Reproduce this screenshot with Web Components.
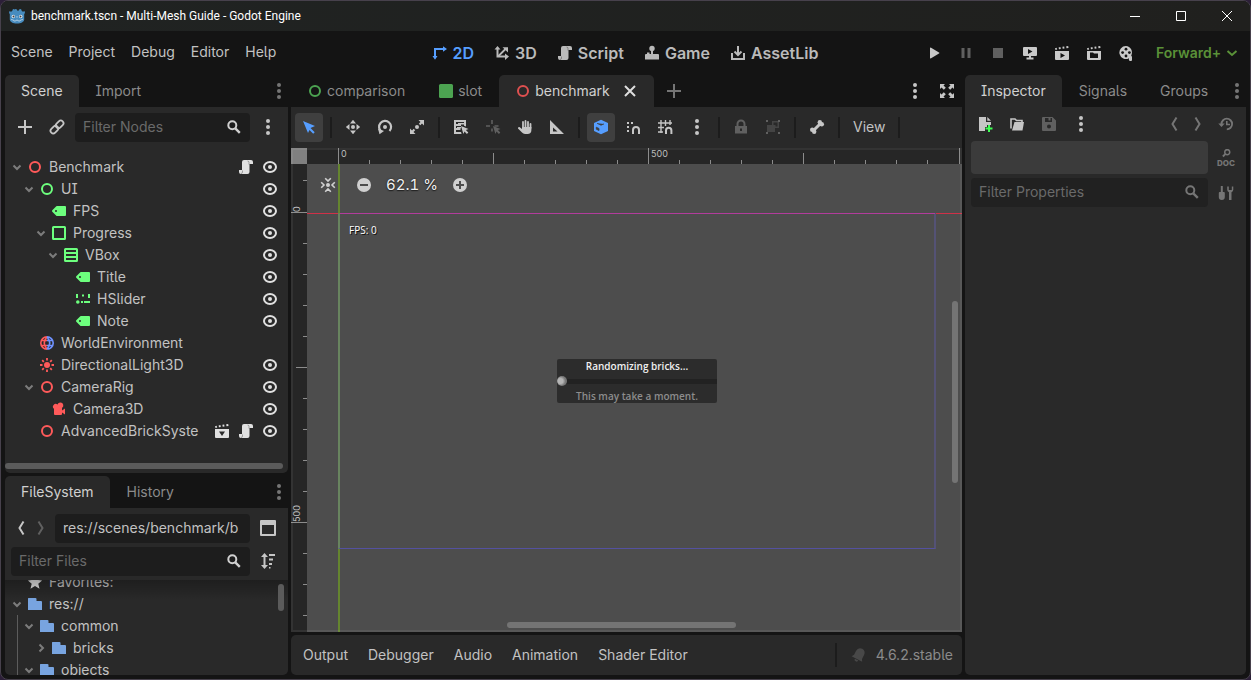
<!DOCTYPE html>
<html lang="en">
<head>
<meta charset="utf-8">
<title>benchmark.tscn - Multi-Mesh Guide - Godot Engine</title>
<style>
  :root {
    --base: #141414; --panel: #292929; --field: #1d1d1d; --raised: #3f3f3f;
    --text: #c2c2c2; --strong: #dedede; --dim: #8b8b8b; --faint: #6a6a6a;
    --accent: #569eff; --green: #6dff7e; --red: #ff5a5a; --renderer: #5a9138;
  }
  html, body { height: 100%; margin: 0; }
  body {
    background: #2c1f38; color: var(--text);
    font: 14px/20px Inter, "Liberation Sans", sans-serif;
    font-feature-settings: "cv05", "cv08";
  }
</style>
</head>
<body>
<editor-window></editor-window>
<script>
const S = (d, w = 2, extra = '') => `<path d="${d}" fill="none" stroke="currentColor" stroke-width="${w}" ${extra}/>`;
const F = (d, extra = '') => `<path d="${d}" fill="currentColor" ${extra}/>`;
const C = (x, y, r, extra = 'fill="currentColor"') => `<circle cx="${x}" cy="${y}" r="${r}" ${extra}/>`;
const CLAP = F('M1 3.2l1.6-.5.6 1.8-1.7.5zM4.6 2.4l1.8-.4.4 1.9-1.8.4zM8.4 1.8l1.8-.3.3 1.9-1.8.3zM12.2 1.3l2-.3.3 2-2 .3z');
const POINTER = F('M8 7l7.5 3-2.6 1.1 2.4 2.4-1.4 1.4-2.4-2.4L10.400 15z');
const SCRIPT = F('M6 1a2 2 0 0 0-2 2v8H1v2a2 2 0 0 0 2 2h6.500a2 2 0 0 0 2-2V5H15V3a2 2 0 0 0-2-2z')
  + '<path d="M4.500 11.500v1.500a1.500 1.500 0 0 1-1.500 1.500M11 5.500V3.500a1.500 1.500 0 0 0-1.500-1.500" stroke="#000" stroke-opacity=".3" fill="none"/>';
const ICONS = {
  godot: `<path d="M6 1l2 .6.4 1.200h1.200L10 1.600 12 1l.8 2 1.200.7L15.500 3 16 5l-.8 1v5.500C15 14 12 15.500 8 15.500S1 14 .8 11.500V6L0 5l.5-2 1.500.7L3.200 3 4 1l2 .6z" fill="#478cbf"/>
    <circle cx="4.300" cy="8.500" r="1.700" fill="#e8f0f6"/><circle cx="11.700" cy="8.500" r="1.700" fill="#e8f0f6"/><circle cx="4.500" cy="8.500" r="1" fill="#414042"/><circle cx="11.500" cy="8.500" r="1" fill="#414042"/>
    <path d="M8 8v1.800M2 11.500l2.500.5.4 1h1.800l.3-.8h2l.3.8h1.800l.4-1 2.500-.5" stroke="#cfe0ee" stroke-width=".7" fill="none"/>`,
  min: S('M3 8.500h10', 1), max: S('M3.500 3.500h9v9h-9z', 1), winclose: S('M3 3l10 10M13 3L3 13', 1),
  d2: F('M3 14.800L.5 11H2V3h9V1.200L15 4l-4 2.800V5H4v6h1.500z'),
  d3: F('M3.500 1L6.500 4.500H4.500v6h6.500V8.500l4 3-4 3.500V12.500H2.500v-8H.5z') + S('M4 11.500L11.500 4', 1.800) + F('M8.500 2.200H14V7.500z'),
  script: SCRIPT,
  game: C(8, 3.500, 2.700) + F('M7 5h2v4h5a1 1 0 0 1 1 1v4.500H1V10a1 1 0 0 1 1-1h1V7.500h2.500V9H7z'),
  asset: S('M2 8v6h12V8') + S('M8 1v8') + S('M4.500 6.500L8 10l3.500-3.500'),
  play: F('M4 3.300v9.400a.7.7 0 0 0 1.100.5L13 8.600a.7.7 0 0 0 0-1.200L5.100 2.800A.7.7 0 0 0 4 3.300z'),
  pause: F('M3.500 3h3v10h-3zM9.500 3h3v10h-3z'), stop: F('M3 3h10v10H3z'),
  remote: `<path d="M2 2h12a1 1 0 0 1 1 1v7a1 1 0 0 1-1 1H9v1.500h2.500V14.500h-7V12.500H7V11H2a1 1 0 0 1-1-1V3a1 1 0 0 1 1-1zm4 2v5l4.500-2.500z" fill="currentColor" fill-rule="evenodd"/>`,
  playscene: CLAP + `<path d="M1 6h14v8a1 1 0 0 1-1 1H2a1 1 0 0 1-1-1zm5.500 2v5l4.500-2.500z" fill="currentColor" fill-rule="evenodd"/>`,
  playcustom: CLAP + `<path d="M1 6h14v8a1 1 0 0 1-1 1H2a1 1 0 0 1-1-1zm3 1.500v5.500h8V8.500H8l-1-1z" fill="currentColor" fill-rule="evenodd"/>`,
  packed: CLAP + `<path d="M1 6h14v8a1 1 0 0 1-1 1H2a1 1 0 0 1-1-1zm4 2.500L8 13l3-4.500z" fill="currentColor" fill-rule="evenodd"/>`,
  movie: `<path d="M8 1a6.500 6.500 0 1 0 3 12.200V14a1.500 1.500 0 0 0 3 1v-3a3 3 0 0 0-.8-1.500A6.500 6.500 0 0 0 8 1z" fill="currentColor"/><g fill="#141414"><circle cx="8" cy="4.200" r="1.400"/><circle cx="8" cy="11" r="1.400"/><circle cx="4.600" cy="7.600" r="1.400"/><circle cx="11.400" cy="7.600" r="1.400"/></g>`,
  chevron: S('M3.500 6l4.500 4 4.500-4'), tree: S('M4.500 6.500L8 10l3.500-3.500'), treeright: S('M6.500 4.500L10 8l-3.500 3.500'),
  dots: C(8, 2, 2) + C(8, 8, 2) + C(8, 14, 2),
  add: F('M7 1v6H1v2h6v6h2V9h6V7H9V1z'),
  link: `<g transform="rotate(-45 8 8)" fill="none" stroke="currentColor" stroke-width="1.800"><rect x="0" y="5.300" width="8.600" height="5.400" rx="2.700"/><rect x="7.400" y="5.300" width="8.600" height="5.400" rx="2.700"/></g>`,
  search: C(6.300, 6.300, 4, 'fill="none" stroke="currentColor" stroke-width="2"') + S('M9.300 9.300l4.500 4.500', 2.400),
  ring: C(8, 8, 5, 'fill="none" stroke="currentColor" stroke-width="2"'),
  square: '<rect x="1" y="1" width="14" height="14" rx="1.500" fill="currentColor"/>',
  close: S('M3 3l10 10M13 3L3 13'),
  expand: F('M1 1h5L4.500 2.500l2.300 2.300-2 2-2.300-2.300L1 6zM15 1v5l-1.500-1.500-2.300 2.300-2-2 2.300-2.300L10 1zM1 15v-5l1.500 1.500 2.300-2.300 2 2-2.300 2.300L6 15zM15 15h-5l1.500-1.500-2.300-2.300 2-2 2.300 2.300L15 10z'),
  select: F('M2 2l12 5-4.500 2 4.200 4.200-1.500 1.500L8.500 11 7 14z'),
  move: C(8, 8, 2) + F('M8 .8L11 4.500H5zM8 15.200L11 11.500H5zM.8 8L4.500 5v6zM15.200 8L11.500 5v6z'),
  rotate: S('M4.200 12.500A6 6 0 1 1 12.500 12', 2.200) + C(8, 8, 2) + F('M1 9.500l6 2.500-4.500 3.300z'),
  scale: C(8, 8, 2) + F('M9.500 1H15v5.500l-2-2-1.700 1.700-1.500-1.500L11.500 3zM1 9.500l2 2 1.700-1.700 1.500 1.500L4.500 13l2 2H1z'),
  listsel: F('M1 1h12v6.500l-2-.8V3H3v2h5v2H3v2h4l.6 2H3v2h5l.6 2H1z') + F('M5 4h6v1.500H5zM4 8h4v1.500H4z') + POINTER,
  pivot: F('M6.200 1h1.600v4H6.200zM1 6.200h4v1.600H1zM9.500 6.200h4v1.600h-4zM6.200 9.500h1.600v3H6.200z') + POINTER,
  hand: S('M6 9V3M8.500 8V2M11 8V3M13.500 9V5', 1.800, 'stroke-linecap="round"') + F('M5 8h9.400v3a4 4 0 0 1-4 4H8a4 4 0 0 1-3-1.500L1 9.500a1.200 1.200 0 0 1 1.800-1.300L5 10z'),
  ruler: `<path d="M1 1v14h14zm3 7.500L8.500 12.500H4z" fill="currentColor" fill-rule="evenodd"/>`,
  cube: F('M8 .8l7 3.200v8L8 15.200 1 12V4z') + '<path d="M4 4.300L8 6.200l3-1.300M3.300 8.200v2l2.700 1.300v-2z" fill="#3f3f3f" stroke="#3f3f3f" stroke-width=".8"/>',
  snap: F('M2 3h2v2H2zM6 3h2v2H6zM2 7h2v2H2zM2 11h2v2H2z') + S('M8 15v-4a3 3 0 0 1 6 0v4'),
  grid: S('M4 1v13M8.500 1v6M13 1v5M1 4h14M1 8.500h6M1 13h5', 1.400) + S('M9 15v-3.500a2.700 2.700 0 0 1 5.400 0V15'),
  lock: S('M4.500 8V5a3.500 3.500 0 0 1 7 0v3') + `<path d="M2 7h12v7.500H2zm5 2.500V12h2V9.500z" fill="currentColor" fill-rule="evenodd"/>`,
  group: F('M1 1h2v2H1zM13 1h2v2h-2zM1 13h2v2H1zM13 13h2v2h-2z') + `<path d="M7 2h7v7h-4v4H2V6h5zm1.500 1.500V6h2V7.500h2v-4z" fill="currentColor" fill-opacity=".5" fill-rule="evenodd"/>`,
  bone: S('M5 11l6-6', 3) + C(3.200, 10.800, 2.200) + C(5.200, 12.800, 2.200) + C(10.800, 3.200, 2.200) + C(12.800, 5.200, 2.200),
  eye: '<ellipse cx="8" cy="8" rx="6" ry="5" fill="none" stroke="currentColor" stroke-width="2"/>' + C(8, 8, 2),
  label: `<path d="M6 3a1 1 0 0 0-.7.3l-4 4a1 1 0 0 0 0 1.400l4 4A1 1 0 0 0 6 13h8a1 1 0 0 0 1-1V4a1 1 0 0 0-1-1zM5 7a1 1 0 0 1 0 2 1 1 0 0 1 0-2z" fill="currentColor" fill-rule="evenodd"/>`,
  panel: '<rect x="2" y="2" width="12" height="12" rx=".5" fill="none" stroke="currentColor" stroke-width="2"/>',
  vbox: '<rect x="2" y="2" width="12" height="12" rx=".5" fill="none" stroke="currentColor" stroke-width="2"/>' + S('M2 6h12M2 10h12'),
  hslider: F('M1 3h2v4H1zM7 3.500h2v2H7zM13 3h2v4h-2zM6 10h2v2H6zM9 10h6v2H9z') + C(2.800, 11, 1.800),
  world: '<g fill="none" stroke-width="1.600"><g stroke="#ff5a5a"><path d="M8 1.800a6.200 6.200 0 0 0 0 12.400M8 2Q2.500 8 8 14M2 5.500h6M2 10.500h6"/></g><g stroke="#6f92ff"><path d="M8 1.800a6.200 6.200 0 0 1 0 12.400M8 2q5.500 6 0 12M8 5.500h6M8 10.500h6"/></g></g>',
  sun: C(8, 8, 3) + S('M8 1v2.500M8 12.500V15M1 8h2.500M12.500 8H15M3.200 3.200l1.600 1.600M11.200 11.200l1.600 1.600M12.800 3.200l-1.600 1.600M4.800 11.200l-1.600 1.600', 1.800),
  camera: F('M9.500 1.500a3 3 0 0 0-3 2A2.500 2.500 0 1 0 3 7.800V13a1 1 0 0 0 1 1h6a1 1 0 0 0 1-1v-1.500l3 2V7.500l-3 2V7a3 3 0 0 0-1.500-5.500z'),
  back: S('M10.500 1.500L6.500 8l4 6.500', 2), fwd: S('M5.500 1.500L9.500 8l-4 6.500', 2),
  split: S('M1 1h14v14H1z', 2, 'stroke-linejoin="round"') + F('M1 1h14v4H1z'),
  sort: S('M4.500 3v10') + F('M4.500 0L8 4H1zM4.500 16L8 12H1zM9 1h6v2H9zM9 5.500h4v2H9zM9 10h3v2H9zM9 14h1.500v1.500H9z'),
  star: F('M8 1.300l2.100 4.600 5 .5-3.800 3.300 1.200 5L8 12.100l-4.500 2.600 1.200-5L.9 6.400l5-.5z'),
  folder: F('M1.500 2a.5.5 0 0 0-.5.5v11a.5.5 0 0 0 .5.5h13a.5.5 0 0 0 .5-.5V6a1 1 0 0 0-1-1H9.500V3a1 1 0 0 0-1-1z'),
  newfile: F('M2 1v14h6v-4h2V9h4V6H9V1zM10.300 1v3.700H14z') + '<path d="M11 9h2v2.500h2.500v2H13V16h-2v-2.500H8.500v-2H11z" fill="#3dff52"/>',
  open: S('M2 12.500V3h4l1.500 1.500H13V6', 1.600) + F('M5.500 6H15l-1.500 8.500H3z'),
  save: `<path d="M1 2a1 1 0 0 1 1-1h9.500L15 4.500V14a1 1 0 0 1-1 1H2a1 1 0 0 1-1-1zm3 0v4h7V2H9.500v2.500h-2V2zm4 6.500a2 2 0 1 0 0 4 2 2 0 0 0 0-4z" fill="currentColor" fill-rule="evenodd"/>`,
  history: S('M3.500 8A5.300 5.300 0 1 1 8.800 13.300', 1.800) + S('M8.800 5v3.500H12', 1.600) + F('M.3 7.500h6.400L3.500 11z'),
  tools: F('M2.800 1h2v6H6a1 1 0 0 1 .8 1v4a3 3 0 0 1-6 0V8a1 1 0 0 1 .8-1h1.200zM9.200 1.500v3.300a2.800 2.800 0 0 0 1.800 2.500V15h2.500V7.300a2.800 2.800 0 0 0 1.800-2.500V1.500h-1.500V5h-3V1.500z'),
  bell: `<g transform="rotate(28 8 8)">${F('M8 1a5 5 0 0 0-4.500 5v4L2 12.500h12L12.500 10V6A5 5 0 0 0 8 1zM6 13.200h4a2 2 0 0 1-4 0z')}</g>`,
  recenter: C(8, 8, 2) + S('M5.200 1.200L8 4l2.800-2.800M5.200 14.800L8 12l2.800 2.800M1.200 5.200L4 8l-2.800 2.800M14.800 5.200L12 8l2.800 2.800', 1.600),
  minus: C(8, 8, 7) + '<path d="M4 7h8v2H4z" fill="#4d4d4d"/>',
  plus: C(8, 8, 7) + '<path d="M7 4h2v3h3v2H9v3H7V9H4V7h3z" fill="#4d4d4d"/>',
  doclens: C(10, 5, 4, 'fill="none" stroke="currentColor" stroke-width="2.400"') + S('M7.200 7.800L3 12', 3),
};

function define(name, render, attach) {
  customElements.define(name, class extends HTMLElement {
    connectedCallback() {
      if (this.shadowRoot) return;
      const t = document.createElement('template');
      t.innerHTML = render(this);
      this.attachShadow({ mode: 'open' }).append(t.content.cloneNode(true));
      if (attach) attach(this, this.shadowRoot);
    }
  });
}
const attr = (el, n, d = '') => el.getAttribute(n) ?? d;
const BTN = `button{all:unset;box-sizing:border-box;cursor:default}button:focus-visible{outline:1px solid var(--accent)}`;

define('ui-icon', el => `
  <style>:host{display:block;flex:none;width:16px;height:16px}svg{display:block;width:100%;height:100%}</style>
  <svg viewBox="0 0 16 16" aria-hidden="true">${ICONS[attr(el, 'name')]}</svg>`);

define('tool-button', el => `
  <style>:host{display:block;flex:none;width:28px;height:28px;color:var(--tool,#c6c6c6)}
  :host([active]){background:var(--raised);border-radius:4px;color:var(--accent);height:29px}
  :host([off]){color:#606060}
  :host([narrow]){width:20px}
  ${BTN}button{display:grid;place-items:center;width:100%;height:28px}</style>
  <button type="button" aria-label="${attr(el, 'label')}"><ui-icon name="${attr(el, 'icon')}"></ui-icon></button>`);

define('tool-divider', () => `
  <style>:host{display:flex;justify-content:center;flex:none;width:8px;height:21px}i{width:2px;background:#1c1c1c}</style><i></i>`);

define('text-button', el => `
  <style>:host{display:block;flex:none}${BTN}button{display:flex;align-items:center;gap:5px;height:28px;white-space:nowrap}</style>
  <button type="button">${el.hasAttribute('icon') ? `<ui-icon name="${attr(el, 'icon')}"></ui-icon>` : ''}<slot></slot></button>`);

define('text-field', el => `
  <style>:host{display:flex;align-items:center;flex:1;min-width:0;height:29px;box-sizing:border-box;padding:0 8px 1px;background:var(--fill,var(--field));border-radius:4px}
  input{all:unset;flex:1;min-width:0;font:inherit;line-height:20px}input::placeholder{color:var(--faint);opacity:1}
  ui-icon{color:var(--tool,#d0d0d0)}</style>
  <input type="text" aria-label="${attr(el, 'label')}" placeholder="${attr(el, 'placeholder')}" value="${attr(el, 'value')}">
  ${el.hasAttribute('search') ? '<ui-icon name="search"></ui-icon>' : ''}`);

define('tab-item', el => `
  <style>:host{display:block;flex:none;color:var(--dim)}
  :host([selected]){background:var(--panel);color:var(--strong);border-radius:5px 5px 0 0}
  :host([selected]) .label{color:#d0d0d0}
  ${BTN}div{display:flex;align-items:center;gap:12px;padding:0 16px}
  .tab{display:flex;align-items:center;gap:4px;height:32px}</style>
  <div><button class="tab" type="button" role="tab" aria-selected="${el.hasAttribute('selected')}">
  ${el.hasAttribute('icon') ? `<ui-icon name="${attr(el, 'icon')}" style="color:${attr(el, 'tint')}"></ui-icon>` : ''}
  <span class="label"><slot></slot></span></button>
  ${el.hasAttribute('closable') ? '<button type="button" aria-label="Close tab"><ui-icon name="close"></ui-icon></button>' : ''}</div>`);

define('dock-panel', () => `
  <style>:host{display:flex;flex-direction:column;min-width:0;min-height:0}
  nav{display:flex;align-items:center;gap:1px;height:32px;flex:none}
  section{flex:1;min-height:0;display:flex;flex-direction:column;background:var(--panel);border-radius:var(--dock-radius,0 0 5px 5px);overflow:hidden}
  .more{margin-left:auto;display:flex;align-items:center}</style>
  <nav role="tablist"><slot name="tab"></slot><div class="more"><slot name="more"></slot></div></nav>
  <section><slot></slot></section>`);

define('tree-row', el => `
  <style>:host{display:flex;align-items:center;height:22px;padding:0 10px 0 calc(4px + 12px*var(--level,0))}
  ${BTN}.arrow{flex:none;width:16px;height:16px;margin-right:2px;color:#7c7c7c}
  span{flex:1;min-width:0;margin-left:6px;white-space:nowrap}
  .acts{display:flex;gap:8px;color:#e0e0e0}</style>
  <button class="arrow" type="button" aria-label="Toggle">${el.hasAttribute('arrow') ? `<ui-icon name="${attr(el, 'arrow')}"></ui-icon>` : ''}</button>
  <ui-icon name="${attr(el, 'icon')}" style="color:${attr(el, 'tint')}"></ui-icon>
  <span><slot></slot></span>
  <div class="acts">${attr(el, 'acts').split(' ').filter(Boolean).map(a => `<button type="button" aria-label="${a}"><ui-icon name="${a}"></ui-icon></button>`).join('')}</div>`,
  el => { el.style.setProperty('--level', attr(el, 'level', 0)); el.setAttribute('role', 'treeitem'); });

define('title-bar', () => `
  <style>:host{display:flex;align-items:center;height:30px;flex:none;background:linear-gradient(90deg,#202322,#20201e);color:#fff;padding-left:8px;font:12px/16px Roboto,"Open Sans",sans-serif}
  span{flex:1;margin-left:6px}${BTN}button{width:46px;height:30px;display:grid;place-items:center}</style>
  <ui-icon name="godot"></ui-icon><span>benchmark.tscn - Multi-Mesh Guide - Godot Engine</span>
  <button type="button" aria-label="Minimize"><ui-icon name="min"></ui-icon></button>
  <button type="button" aria-label="Maximize"><ui-icon name="max"></ui-icon></button>
  <button type="button" aria-label="Close"><ui-icon name="winclose"></ui-icon></button>`);

define('main-menu', () => `
  <style>:host{display:grid;grid-template-columns:1fr auto 1fr;align-items:center;height:44px;flex:none;padding:0 11px 0 10px}
  .menu{display:flex;gap:16px;padding-bottom:2px}
  .modes{display:flex;gap:20px;font-size:16px;font-weight:600;color:#bababa}.on{color:var(--accent)}
  .run{display:flex;align-items:center;justify-content:flex-end;gap:4px;--tool:#c9c9c9}
  label{position:relative;display:flex;align-items:center;margin-left:12px;color:var(--renderer)}
  select{all:unset;font-weight:600;padding-right:17px}
  label ui-icon{position:absolute;right:-1px;pointer-events:none}</style>
  <div class="menu"><text-button>Scene</text-button><text-button>Project</text-button><text-button>Debug</text-button><text-button>Editor</text-button><text-button>Help</text-button></div>
  <div class="modes"><text-button icon="d2" class="on">2D</text-button><text-button icon="d3">3D</text-button><text-button icon="script">Script</text-button><text-button icon="game">Game</text-button><text-button icon="asset">AssetLib</text-button></div>
  <div class="run"><tool-button icon="play" label="Run project"></tool-button><tool-button off icon="pause" label="Pause"></tool-button><tool-button off icon="stop" label="Stop"></tool-button><tool-button icon="remote" label="Remote deploy"></tool-button><tool-button icon="playscene" label="Run scene"></tool-button><tool-button icon="playcustom" label="Run specific scene"></tool-button><tool-button icon="movie" label="Movie maker"></tool-button>
  <label><select aria-label="Rendering method"><option>Forward+</option></select><ui-icon name="chevron"></ui-icon></label></div>`);

define('scene-dock', () => `
  <style>:host{display:contents}dock-panel{height:100%}
  .bar{display:flex;align-items:flex-start;gap:4px;padding:6px;flex:none}
  .tree{flex:1;padding-top:8px;min-height:0;overflow:hidden}
  .hbar{height:6px;flex:none;margin:0 5px 4px 0;border-radius:3px;background:#5b5b5b}
  .more{color:#757575;margin-right:1px}</style>
  <dock-panel>
    <tab-item slot="tab" selected>Scene</tab-item><tab-item slot="tab">Import</tab-item>
    <ui-icon slot="more" class="more" name="dots"></ui-icon>
    <div class="bar"><tool-button icon="add" label="Add node"></tool-button><tool-button icon="link" label="Instantiate scene"></tool-button><text-field label="Filter Nodes" placeholder="Filter Nodes" search></text-field><tool-button icon="dots" label="Scene options"></tool-button></div>
    <div class="tree" role="tree">
      <tree-row level="0" arrow="tree" icon="ring" tint="var(--red)" acts="script eye">Benchmark</tree-row>
      <tree-row level="1" arrow="tree" icon="ring" tint="var(--green)" acts="eye">UI</tree-row>
      <tree-row level="2" icon="label" tint="var(--green)" acts="eye">FPS</tree-row>
      <tree-row level="2" arrow="tree" icon="panel" tint="var(--green)" acts="eye">Progress</tree-row>
      <tree-row level="3" arrow="tree" icon="vbox" tint="var(--green)" acts="eye">VBox</tree-row>
      <tree-row level="4" icon="label" tint="var(--green)" acts="eye">Title</tree-row>
      <tree-row level="4" icon="hslider" tint="var(--green)" acts="eye">HSlider</tree-row>
      <tree-row level="4" icon="label" tint="var(--green)" acts="eye">Note</tree-row>
      <tree-row level="1" icon="world">WorldEnvironment</tree-row>
      <tree-row level="1" icon="sun" tint="var(--red)" acts="eye">DirectionalLight3D</tree-row>
      <tree-row level="1" arrow="tree" icon="ring" tint="var(--red)" acts="eye">CameraRig</tree-row>
      <tree-row level="2" icon="camera" tint="var(--red)" acts="eye">Camera3D</tree-row>
      <tree-row level="1" icon="ring" tint="var(--red)" acts="packed script eye">AdvancedBrickSyste</tree-row>
    </div><div class="hbar"></div>
  </dock-panel>`);

define('files-dock', () => `
  <style>:host{display:contents}dock-panel{height:100%}
  .bar{display:flex;align-items:flex-start;gap:4px;padding:6px 6px 0;flex:none}.bar+.bar{padding:4px 6px}
  .nav{display:flex}
  .tree{position:relative;flex:1;min-height:0;overflow:hidden}
  .rows{margin-top:-9px}
  .tree::before{content:"";position:absolute;inset:0 0 auto;height:20px;background:linear-gradient(#00000044,#0000)}
  .guide{position:absolute;left:12px;top:35px;bottom:0;width:1px;background:#5c5c5c}
  .vbar{position:absolute;right:4px;top:4px;width:6px;height:27px;border-radius:3px;background:#5b5b5b}
  .more{color:#757575;margin-right:1px}</style>
  <dock-panel>
    <tab-item slot="tab" selected>FileSystem</tab-item><tab-item slot="tab">History</tab-item>
    <ui-icon slot="more" class="more" name="dots"></ui-icon>
    <div class="bar"><div class="nav"><tool-button narrow icon="back" label="Back"></tool-button><tool-button narrow off icon="fwd" label="Forward"></tool-button></div><text-field label="Path" value="res://scenes/benchmark/b"></text-field><tool-button icon="split" label="Change split mode"></tool-button></div>
    <div class="bar"><text-field label="Filter Files" placeholder="Filter Files" search></text-field><tool-button icon="sort" label="Sort files"></tool-button></div>
    <div class="tree"><div class="rows" role="tree">
      <tree-row level="0" icon="star" tint="#e0e0e0">Favorites:</tree-row>
      <tree-row level="0" arrow="tree" icon="folder" tint="#78a4e0">res://</tree-row>
      <tree-row level="1" arrow="tree" icon="folder" tint="#78a4e0">common</tree-row>
      <tree-row level="2" arrow="treeright" icon="folder" tint="#78a4e0">bricks</tree-row>
      <tree-row level="1" arrow="tree" icon="folder" tint="#78a4e0">objects</tree-row>
    </div><div class="guide"></div><div class="vbar"></div></div>
  </dock-panel>`);

define('inspector-dock', () => `
  <style>:host{display:contents}dock-panel{height:100%}
  .tools,.line{display:flex;align-items:center;padding:0 6px;gap:4px}
  .tools{height:32px;padding-top:2px}
  .tools .hist{margin-left:auto;display:flex;gap:4px;align-items:center}
  .tools tool-button{height:30px}
  .line{margin-bottom:4px}
  .line text-field{--fill:#212121}
  .object{flex:1;height:33px;border-radius:4px;background:#3b3b3b}
  .dim{--tool:#757575}
  .doc{all:unset;display:flex;flex-direction:column;align-items:center;width:28px;color:#757575;font:800 8px/8px Inter,sans-serif}
  .doc ui-icon{width:12px;height:10px}
  .more{color:#757575;margin-right:1px}</style>
  <dock-panel>
    <tab-item slot="tab" selected>Inspector</tab-item><tab-item slot="tab">Signals</tab-item><tab-item slot="tab">Groups</tab-item>
    <ui-icon slot="more" class="more" name="dots"></ui-icon>
    <div class="tools"><tool-button icon="newfile" label="New resource"></tool-button><tool-button icon="open" label="Load resource"></tool-button><tool-button off icon="save" label="Save resource"></tool-button><tool-button icon="dots" label="Resource options"></tool-button>
      <div class="hist dim"><tool-button narrow icon="back" label="Previous object"></tool-button><tool-button narrow icon="fwd" label="Next object"></tool-button><tool-button icon="history" label="Object history"></tool-button></div></div>
    <div class="line"><div class="object"></div><button type="button" class="doc"><ui-icon name="doclens"></ui-icon>DOC</button></div>
    <div class="line dim"><text-field label="Filter Properties" placeholder="Filter Properties" search></text-field><tool-button icon="tools" label="Property tools"></tool-button></div>
  </dock-panel>`);

define('canvas-ruler', () => `
  <style>:host{display:block;overflow:hidden;background:#262626}svg{display:block;width:100%;height:100%}
  text{font-size:9px;fill:#bdbdbd}</style><svg aria-hidden="true"></svg>`,
  (el, root) => {
    const vertical = el.hasAttribute('vertical'), origin = +attr(el, 'origin'), step = 31.05;
    const last = Math.ceil((vertical ? innerHeight : innerWidth) / step);
    let out = '';
    for (let i = -1; i <= last; i++) {
      const p = Math.floor(origin + i * step), len = i % 10 === 0 ? 16 : i % 5 === 0 ? 11 : 4;
      out += vertical ? `<rect y="${p}" x="${16 - len}" height="1" width="${len}" fill="#8c8c8c"/>` : `<rect x="${p}" y="${16 - len}" width="1" height="${len}" fill="#8c8c8c"/>`;
      const room = p + 30 < (vertical ? el.clientHeight : el.clientWidth);
      if (i % 10 === 0 && room) out += vertical ? `<text transform="translate(9 ${p}) rotate(-90)">${i * 50}</text>` : `<text x="${p + 3}" y="9">${i * 50}</text>`;
    }
    root.querySelector('svg').innerHTML = out;
  });

define('canvas-view', () => `
  <style>:host{display:grid;grid-template:16px 1fr / 16px 1fr;position:relative;min-height:0;background:#4d4d4d;overflow:hidden}
  :host::after{content:"";position:absolute;inset:0;border:2px solid #ffffff10;pointer-events:none}
  .corner{background:#808080}
  .stage{position:relative;overflow:hidden}
  .stage>*{position:absolute}
  .axis-y{left:31px;top:0;bottom:0;width:2px;background:#65852f}
  .axis-x{left:0;right:0;top:49px;height:1px;background:#d03048}
  .bounds{left:31px;top:49px;width:598px;height:336px;box-sizing:border-box;border:solid;border-width:0 2px 1px;border-color:#0000 #545275 #5451a0 #68845f}
  .bounds::before{content:"";position:absolute;left:0;right:-1px;top:0;height:1px;background:#b23c9c}
  .zoom{left:13px;top:7px;display:flex;align-items:center}
  .zoom tool-button{--tool:#d0d0d0}.zoom tool-button:first-child{margin:0 8px 0 -6px}
  .zoom span{width:60px;margin:0 4px;text-align:center;font-size:15px;font-variant-numeric:tabular-nums;color:#f0f0f0;text-shadow:0 0 2px #222,0 1px 1px #222}
  .fps{left:42px;top:59px;font:10px/14px "Open Sans",sans-serif;color:#fff;text-shadow:1px 1px 0 #111}
  .card{left:250px;top:195px;width:160px;height:44px;box-sizing:border-box;background:#2c2c2c;border-radius:2px;text-align:center;font:600 10px/14px "Open Sans",sans-serif;color:#f0f0f0;display:flex;flex-direction:column}
  .card p{margin:0}.card .note{color:#8d8d8d;margin-top:auto}
  input{appearance:none;display:block;width:100%;height:10px;margin:3px 0 0;background:linear-gradient(#222,#222) center/100% 5px no-repeat}
  input::-webkit-slider-thumb{appearance:none;width:10px;height:10px;border-radius:5px;background:radial-gradient(circle at 35% 50%,#b5b5b5 30%,#777 60%)}
  .v{right:4px;top:137px;width:6px;height:182px}.h{bottom:4px;left:200px;width:229px;height:6px}
  .v,.h{border-radius:3px;background:#747474}</style>
  <div class="corner"></div><canvas-ruler origin="31"></canvas-ruler><canvas-ruler vertical origin="48"></canvas-ruler>
  <div class="stage">
    <div class="axis-x"></div><div class="axis-y"></div><div class="bounds"></div>
    <div class="zoom"><tool-button icon="recenter" label="Center view"></tool-button><tool-button icon="minus" label="Zoom out"></tool-button><span>62.1 %</span><tool-button icon="plus" label="Zoom in"></tool-button></div>
    <div class="fps">FPS: 0</div>
    <div class="card"><p>Randomizing bricks...</p><input type="range" min="0" max="100" value="0" aria-label="Progress"><p class="note">This may take a moment.</p></div>
    <div class="v"></div><div class="h"></div>
  </div>`);

define('scene-editor', () => `
  <style>:host{display:flex;flex-direction:column;gap:3px;min-width:0;min-height:0}
  dock-panel{flex:1;--dock-radius:0}
  .bar{display:flex;align-items:flex-start;gap:4px;padding:6px 4px;flex:none}
  .bar text-button{padding:0 6px}
  .bar tool-divider{margin-top:4px}
  canvas-view{flex:1}
  .add{width:38px;color:#757575;display:grid;place-items:center}
  .right{display:flex;gap:4px;margin-right:1px}
  footer{display:flex;align-items:center;gap:20px;height:40px;flex:none;padding:0 9px 0 12px;background:var(--panel);border-radius:5px}
  .status{display:flex;align-items:center;margin-left:auto;color:var(--dim)}.status ui-icon{color:#484848;margin:0 9px 0 11px}
  .status tool-divider{height:24px}</style>
  <dock-panel>
    <tab-item slot="tab" icon="ring" tint="#4ca351">comparison</tab-item><tab-item slot="tab" icon="square" tint="#4ca351">slot</tab-item><tab-item slot="tab" icon="ring" tint="#df5050" selected closable>benchmark</tab-item>
    <div slot="tab" class="add"><ui-icon name="add"></ui-icon></div>
    <div slot="more" class="right"><tool-button icon="dots" label="Tab options"></tool-button><tool-button icon="expand" label="Distraction free mode"></tool-button></div>
    <div class="bar">
      <tool-button active icon="select" label="Select"></tool-button><tool-divider></tool-divider>
      <tool-button icon="move" label="Move"></tool-button><tool-button icon="rotate" label="Rotate"></tool-button><tool-button icon="scale" label="Scale"></tool-button><tool-divider></tool-divider>
      <tool-button icon="listsel" label="List selectable nodes"></tool-button><tool-button off icon="pivot" label="Change pivot"></tool-button><tool-button icon="hand" label="Pan"></tool-button><tool-button icon="ruler" label="Ruler"></tool-button><tool-divider></tool-divider>
      <tool-button active icon="cube" label="Use local space"></tool-button><tool-button icon="snap" label="Smart snap"></tool-button><tool-button icon="grid" label="Grid snap"></tool-button><tool-button icon="dots" label="Snapping options"></tool-button><tool-divider></tool-divider>
      <tool-button off icon="lock" label="Lock"></tool-button><tool-button off icon="group" label="Group"></tool-button><tool-divider></tool-divider>
      <tool-button icon="bone" label="Skeleton options"></tool-button><tool-divider></tool-divider>
      <text-button>View</text-button><tool-divider></tool-divider>
    </div>
    <canvas-view></canvas-view>
  </dock-panel>
  <footer><text-button>Output</text-button><text-button>Debugger</text-button><text-button>Audio</text-button><text-button>Animation</text-button><text-button>Shader Editor</text-button>
    <div class="status"><tool-divider></tool-divider><ui-icon name="bell"></ui-icon><span>4.6.2.stable</span></div></footer>`);

define('editor-window', () => `
  <style>:host{display:flex;flex-direction:column;height:100vh;min-height:480px;box-sizing:border-box;border:1px solid #47414c;border-radius:8px;overflow:hidden;background:var(--base)}
  main{flex:1;min-height:0;display:grid;grid-template-columns:283px minmax(0,1fr) 281px;gap:3px;padding:0 4px 4px}
  .left{display:grid;grid-template:minmax(0,2fr) minmax(0,1fr) / minmax(0,1fr);gap:3px;min-height:0}
  .left>div,.right{min-width:0;min-height:0}</style>
  <title-bar></title-bar><main-menu></main-menu>
  <main><div class="left"><div><scene-dock></scene-dock></div><div><files-dock></files-dock></div></div><scene-editor></scene-editor><div class="right"><inspector-dock></inspector-dock></div></main>`);
</script>
</body>
</html>
